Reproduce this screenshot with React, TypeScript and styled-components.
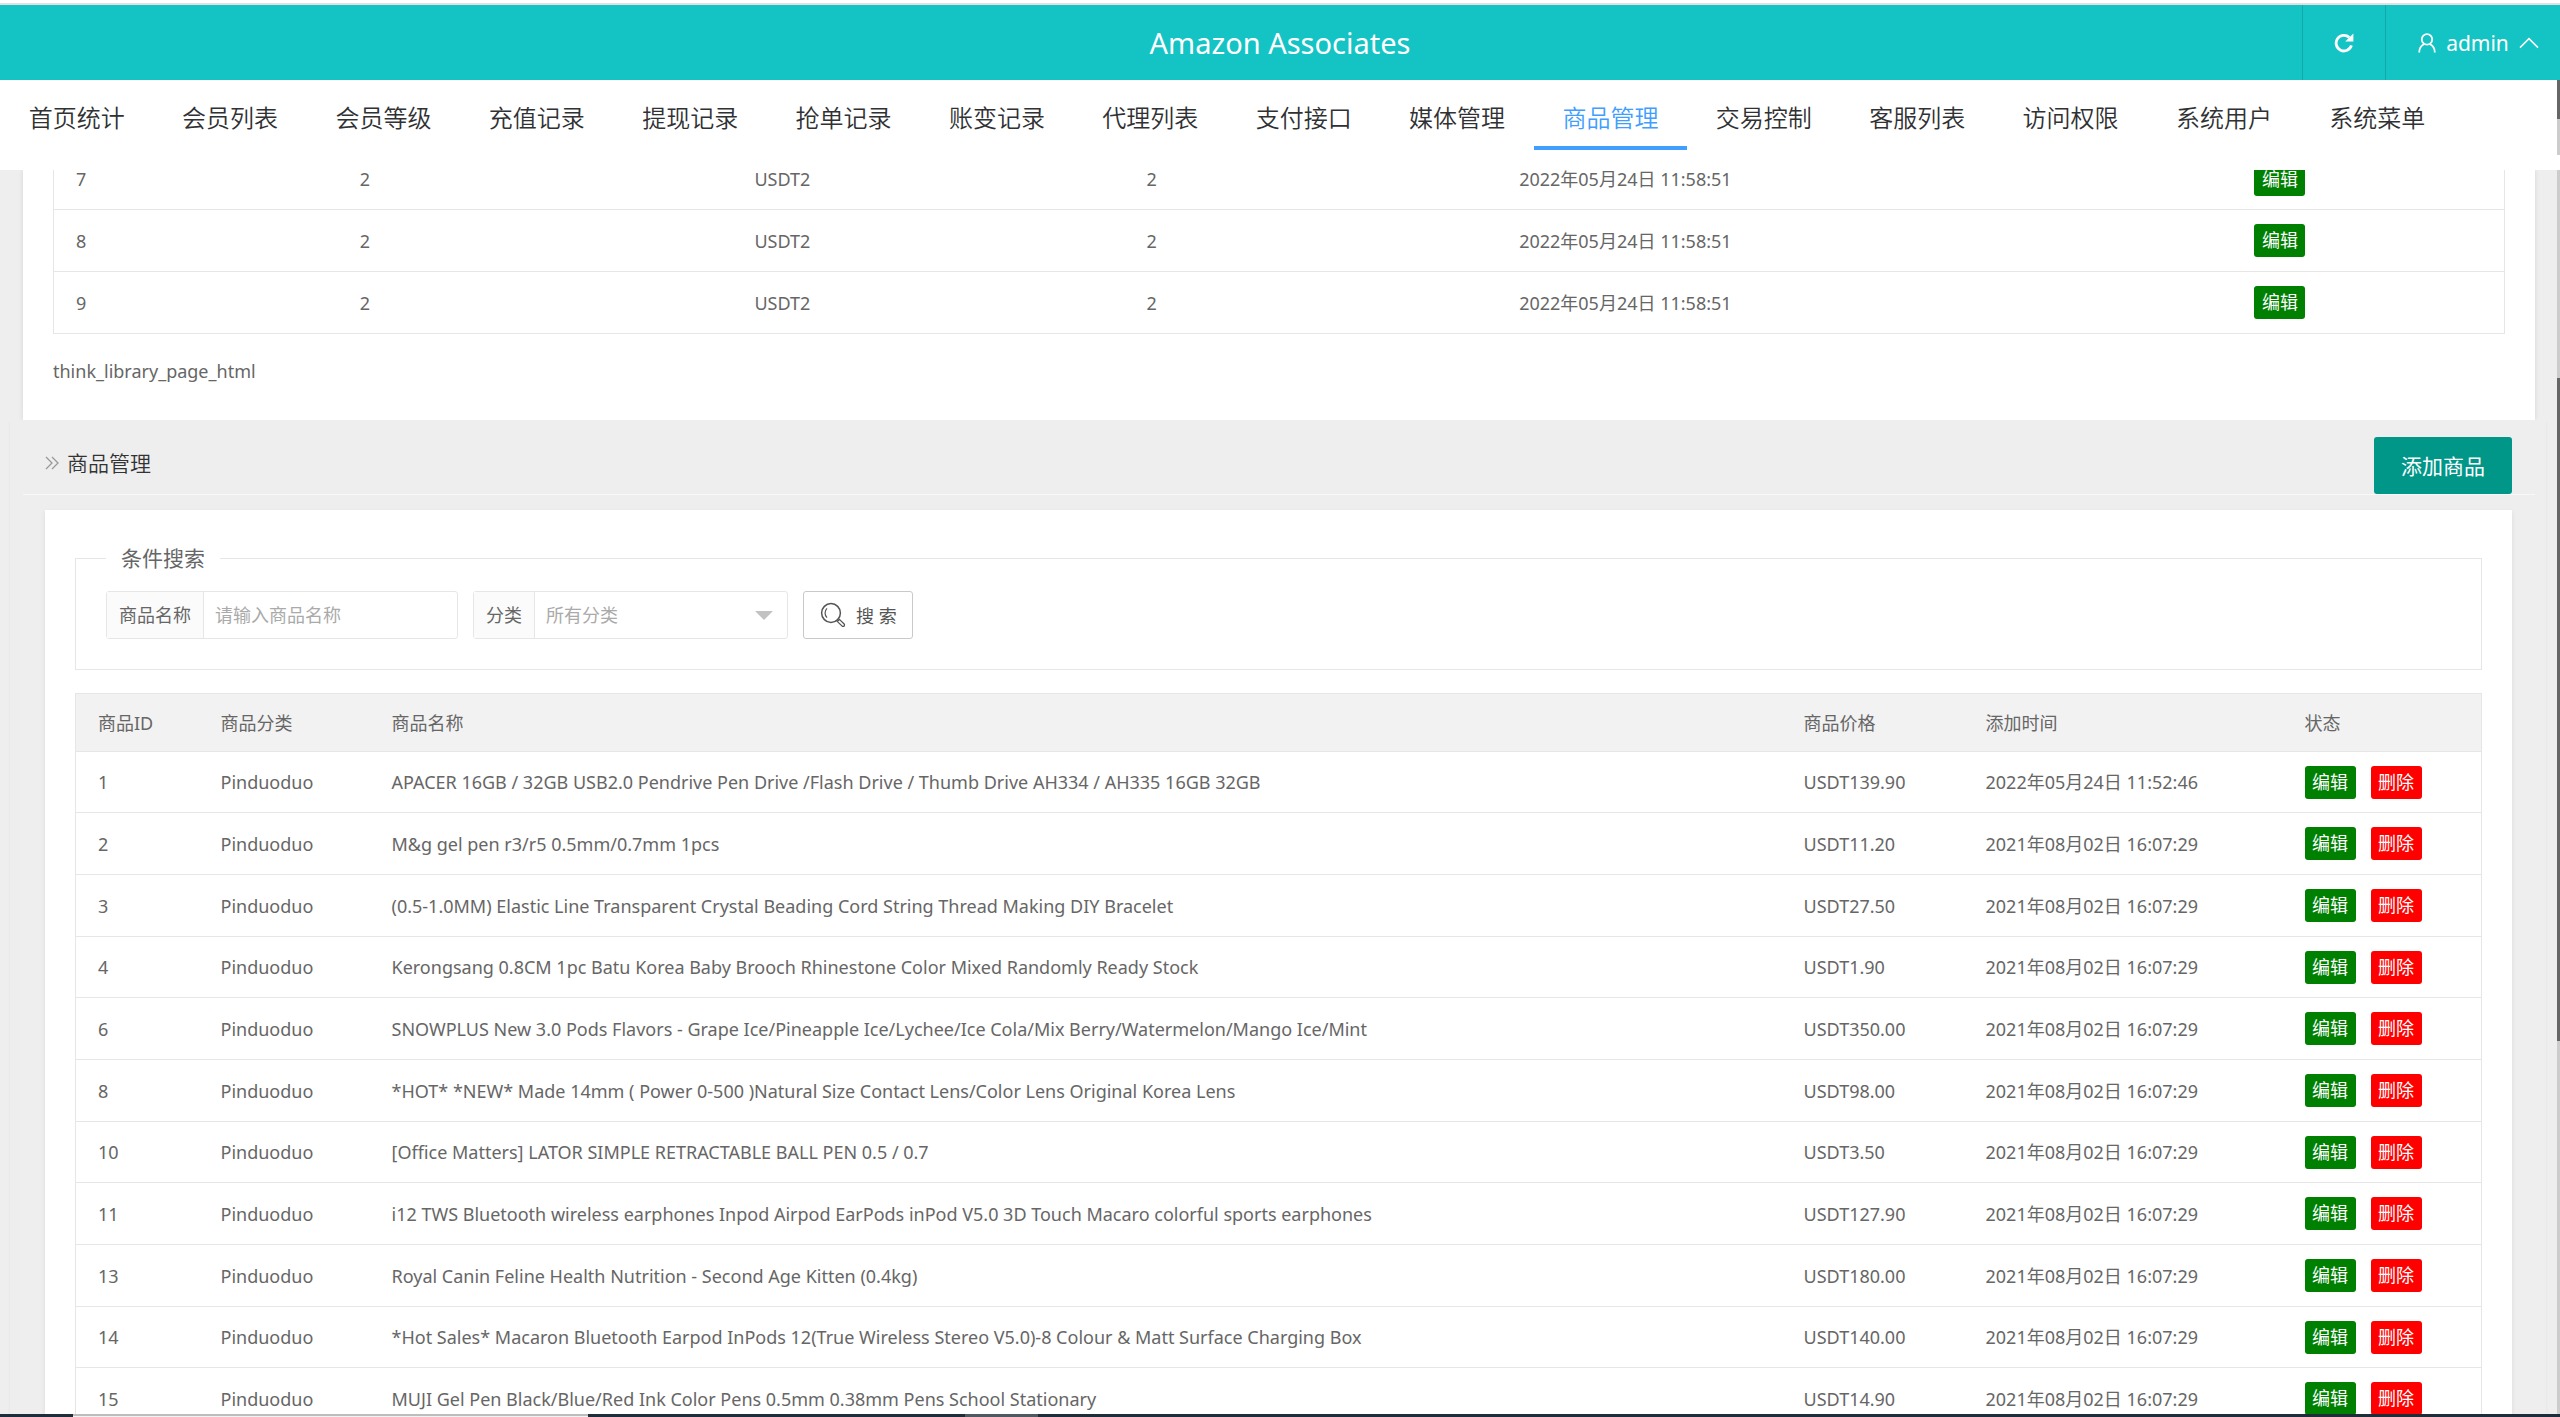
import React from 'react';
import styled, { createGlobalStyle, css } from 'styled-components';

const Global = createGlobalStyle`
  *, *::before, *::after { box-sizing: border-box; }
  html, body { margin: 0; height: 100%; overflow: hidden; }
  #root { height: 100%; }
  body, button, input, select {
    font-family: "Noto Sans", "Noto Sans CJK SC", sans-serif;
    font-size: 18px;
    color: #666;
  }
  body { background: #eee; line-height: 24px; }
`;

const Page = styled.div`
  display: flex;
  flex-direction: column;
  height: 100vh;
  overflow: hidden;
`;

const Header = styled.header`
  flex: none;
  display: grid;
  grid-template-columns: 1fr auto 1fr;
  height: 80px;
  padding-top: 5px;
  background: linear-gradient(#fff 3px, #e0e0e0 3px, #e0e0e0 5px, #14c4c5 5px);
`;

const Brand = styled.h1`
  grid-column: 2;
  margin: 0;
  align-self: center;
  font-size: 29px;
  line-height: 40px;
  font-weight: 400;
  color: #fff;
`;

const Tools = styled.div`
  display: flex;
  justify-content: flex-end;
`;

const ToolButton = styled.button<{ $wide?: boolean }>`
  display: flex;
  align-items: center;
  justify-content: center;
  gap: 10px;
  width: ${(p) => (p.$wide ? 175 : 83)}px;
  padding: ${(p) => (p.$wide ? '0 21px 0 32px' : '0')};
  border: 0;
  border-left: 1px solid #12a9ab;
  background: none;
  color: #fff;
  font-size: 21px;
`;

const Nav = styled.nav`
  flex: none;
  display: grid;
  grid-template-columns: repeat(16, 1fr);
  height: 90px;
  padding: 0 106px 20px 0;
  background: #fff;
`;

const NavLink = styled.a<{ $active: boolean }>`
  display: flex;
  align-items: center;
  justify-content: center;
  padding-top: 10px;
  border-bottom: 4px solid ${(p) => (p.$active ? '#409eff' : 'transparent')};
  color: ${(p) => (p.$active ? '#409eff' : '#303133')};
  font-size: 24px;
  font-weight: 350;
  line-height: 32px;
  text-decoration: none;
`;

const Main = styled.main`
  flex: 1;
  min-height: 0;
  overflow: hidden;
  display: flex;
  flex-direction: column;
`;

const Categories = styled.section`
  flex: none;
  height: 250px;
  margin: 0 25px 0 23px;
  padding: 0 30px;
  background: #fff;
  box-shadow: 0 0 5px rgba(0, 0, 0, 0.1);
  display: flex;
  flex-direction: column;
  overflow: hidden;
`;

const ScrolledRows = styled.div`
  flex: none;
  height: 164px;
  display: flex;
  flex-direction: column;
  justify-content: flex-end;
  overflow: hidden;
`;

const PageNote = styled.p`
  margin: 0;
  padding-top: 25px;
`;

const Table = styled.table`
  flex: none;
  width: 100%;
  table-layout: fixed;
  border-collapse: collapse;
  border: 1px solid #e6e6e6;
  background: #fff;
`;

const rule = css`
  border-bottom: 1px solid #e6e6e6;
`;

const HeadRow = styled.tr`
  height: 58px;
  background: #f2f2f2;
  ${rule}
`;

const Row = styled.tr`
  height: 62px;
  ${rule}
  &:nth-child(3n + 1) { height: 61px; }
`;

const Th = styled.th`
  padding: 0 22px;
  text-align: left;
  font-weight: 400;
`;

const Td = styled.td`
  padding: 0 22px;
  white-space: nowrap;
`;

const Actions = styled.div`
  display: flex;
  gap: 15px;
`;

const Tag = styled.button<{ $danger?: boolean }>`
  flex: none;
  width: 51px;
  height: 33px;
  padding: 0;
  border: 0;
  border-radius: 3px;
  background: ${(p) => (p.$danger ? '#f00' : '#008000')};
  color: #fff;
  line-height: 33px;
`;

const Products = styled.section`
  flex: none;
  margin: 0 14px 0 10px;
  background: #eee;
  box-shadow: 0 2px 3px rgba(0, 0, 0, 0.05);
`;

const SectionHead = styled.div`
  display: flex;
  align-items: center;
  justify-content: space-between;
  height: 75px;
  margin: 0 11px 0 13px;
  padding: 17px 23px 0 22px;
  border-bottom: 1px solid #f8f8f8;
`;

const SectionTitle = styled.h2`
  display: flex;
  align-items: center;
  gap: 8px;
  margin: 0;
  padding-bottom: 6px;
  font-size: 21px;
  font-weight: 350;
  color: #333;
`;

const AddButton = styled.button`
  height: 57px;
  padding: 0 27px 2px;
  border: 0;
  border-radius: 3px;
  background: #009688;
  color: #fff;
  font-size: 21px;
`;

const Card = styled.div`
  margin: 15px 34px 0 35px;
  padding: 33px 30px;
  background: #fff;
  box-shadow: 0 2px 5px rgba(0, 0, 0, 0.08);
`;

const SearchBox = styled.fieldset`
  margin: 0 0 23px;
  padding: 18px 30px 30px;
  border: 1px solid #e6e6e6;
`;

const Legend = styled.legend`
  padding: 0 15px;
  font-size: 21px;
  line-height: 30px;
`;

const SearchForm = styled.form`
  display: flex;
  gap: 15px;
`;

const Field = styled.div<{ $width: number }>`
  display: flex;
  width: ${(p) => p.$width}px;
  height: 48px;
  border: 1px solid #e6e6e6;
  border-radius: 3px;
  background: #fff;
`;

const FieldLabel = styled.label`
  flex: none;
  padding: 0 12px;
  border-right: 1px solid #e6e6e6;
  background: #fbfbfb;
  line-height: 46px;
`;

const TextInput = styled.input`
  flex: 1;
  min-width: 0;
  padding: 0 11px;
  border: 0;
  outline: 0;
  background: none;
  &::placeholder { color: #aaa; }
`;

const SelectWrap = styled.div`
  flex: 1;
  display: flex;
  align-items: center;
  padding-right: 14px;
`;

const Select = styled.select`
  flex: 1;
  align-self: stretch;
  padding: 0 11px;
  border: 0;
  appearance: none;
  background: none;
  color: #aaa;
`;

const SearchButton = styled.button`
  display: flex;
  align-items: center;
  gap: 10px;
  height: 48px;
  padding: 0 15px 0 16px;
  border: 1px solid #c9c9c9;
  border-radius: 3px;
  background: #fff;
  color: #555;
`;

const TopScroll = styled.div`
  position: absolute;
  top: 80px;
  right: 0;
  width: 3px;
  height: 75px;
  background: linear-gradient(#666 39px, #ccc 39px);
`;

const PageScroll = styled.div`
  position: absolute;
  top: 170px;
  right: 0;
  bottom: 3px;
  width: 3px;
  background: linear-gradient(#ccc 208px, #666 208px, #666 871px, #ccc 871px);
`;

const Taskbar = styled.footer`
  flex: none;
  display: flex;
  height: 3px;
  background: #1f2d38;
`;

const TaskGap = styled.div<{ $width: number }>`
  width: ${(p) => p.$width}px;
`;

const TaskWindow = styled.div`
  width: 515px;
  background: linear-gradient(#bdbdbd 2px, #f2f2f2 2px);
`;

const TaskItem = styled.div`
  width: 73px;
  background: #4d5a62;
`;

const menu = [
  '首页统计', '会员列表', '会员等级', '充值记录', '提现记录', '抢单记录', '账变记录', '代理列表',
  '支付接口', '媒体管理', '商品管理', '交易控制', '客服列表', '访问权限', '系统用户', '系统菜单',
];

const categories = [7, 8, 9].map((id) => ({
  id, level: '2', price: 'USDT2', sort: '2', time: '2022年05月24日 11:58:51',
}));

const stamp = '2021年08月02日 16:07:29';

const products = [
  { id: 1, name: 'APACER 16GB / 32GB USB2.0 Pendrive Pen Drive /Flash Drive / Thumb Drive AH334 / AH335 16GB 32GB', price: '139.90', time: '2022年05月24日 11:52:46' },
  { id: 2, name: 'M&g gel pen r3/r5 0.5mm/0.7mm 1pcs', price: '11.20', time: stamp },
  { id: 3, name: '(0.5-1.0MM) Elastic Line Transparent Crystal Beading Cord String Thread Making DIY Bracelet', price: '27.50', time: stamp },
  { id: 4, name: 'Kerongsang 0.8CM 1pc Batu Korea Baby Brooch Rhinestone Color Mixed Randomly Ready Stock', price: '1.90', time: stamp },
  { id: 6, name: 'SNOWPLUS New 3.0 Pods Flavors - Grape Ice/Pineapple Ice/Lychee/Ice Cola/Mix Berry/Watermelon/Mango Ice/Mint', price: '350.00', time: stamp },
  { id: 8, name: '*HOT* *NEW* Made 14mm ( Power 0-500 )Natural Size Contact Lens/Color Lens Original Korea Lens', price: '98.00', time: stamp },
  { id: 10, name: '[Office Matters] LATOR SIMPLE RETRACTABLE BALL PEN 0.5 / 0.7', price: '3.50', time: stamp },
  { id: 11, name: 'i12 TWS Bluetooth wireless earphones Inpod Airpod EarPods inPod V5.0 3D Touch Macaro colorful sports earphones', price: '127.90', time: stamp },
  { id: 13, name: 'Royal Canin Feline Health Nutrition - Second Age Kitten (0.4kg)', price: '180.00', time: stamp },
  { id: 14, name: '*Hot Sales* Macaron Bluetooth Earpod InPods 12(True Wireless Stereo V5.0)-8 Colour & Matt Surface Charging Box', price: '140.00', time: stamp },
  { id: 15, name: 'MUJI Gel Pen Black/Blue/Red Ink Color Pens 0.5mm 0.38mm Pens School Stationary', price: '14.90', time: stamp },
];

const Columns = ({ widths }: { widths: string[] }) => (
  <colgroup>{widths.map((width, i) => <col key={i} style={{ width }} />)}</colgroup>
);

const RefreshIcon = () => (
  <svg width="20" height="20" viewBox="0 0 20 20" fill="none" aria-hidden="true">
    <path d="M17.4 12.4A7.8 7.8 0 1 1 15.2 4.4" stroke="#fff" strokeWidth="2.8" />
    <path d="M19.4 0.6V8.4H11.2Z" fill="#fff" />
  </svg>
);

const UserIcon = () => (
  <svg width="18" height="20" viewBox="0 0 18 20" fill="none" stroke="#fff" strokeWidth="1.8" aria-hidden="true">
    <circle cx="9" cy="6.4" r="5.2" />
    <path d="M1.2 19.4C1.2 15.4 3 12.6 6.4 11M16.8 19.4C16.8 15.4 15 12.6 11.6 11" />
  </svg>
);

const ChevronUp = () => (
  <svg width="20" height="12" viewBox="0 0 20 12" fill="none" stroke="#fff" strokeWidth="1.5" aria-hidden="true">
    <path d="M1 10.6L10 1.6L19 10.6" />
  </svg>
);

const DoubleArrow = () => (
  <svg width="14" height="14" viewBox="0 0 14 14" fill="none" stroke="#999" strokeWidth="1.3" aria-hidden="true">
    <path d="M1 1L7 7L1 13M7 1L13 7L7 13" />
  </svg>
);

const SearchIcon = () => (
  <svg width="26" height="26" viewBox="0 0 26 26" fill="none" stroke="#555" aria-hidden="true">
    <circle cx="11" cy="11" r="9.4" strokeWidth="1.5" />
    <path d="M7 15.6A6.4 6.4 0 0 1 7 6.4" strokeWidth="1.2" />
    <path d="M17.2 19.4L19.4 17.4L24.4 22.2Q25 24.6 22.4 24.4Z" strokeWidth="1.3" strokeLinejoin="round" />
  </svg>
);

const Caret = () => (
  <svg width="18" height="9" viewBox="0 0 18 9" aria-hidden="true">
    <path d="M0 0H18L9 9Z" fill="#c2c2c2" />
  </svg>
);

export default function App() {
  return (
    <Page>
      <Global />
      <Header>
        <Brand>Amazon Associates</Brand>
        <Tools>
          <ToolButton type="button" aria-label="刷新"><RefreshIcon /></ToolButton>
          <ToolButton type="button" $wide><UserIcon />admin<ChevronUp /></ToolButton>
        </Tools>
      </Header>
      <Nav>
        {menu.map((item) => (
          <NavLink key={item} href="#" $active={item === '商品管理'}>{item}</NavLink>
        ))}
      </Nav>
      <Main>
        <Categories>
          <ScrolledRows>
            <Table>
              <Columns widths={['11.6%', '16.1%', '16%', '15.2%', '30%', '11.1%']} />
              <tbody>
                {categories.map((c) => (
                  <Row key={c.id}>
                    <Td>{c.id}</Td>
                    <Td>{c.level}</Td>
                    <Td>{c.price}</Td>
                    <Td>{c.sort}</Td>
                    <Td>{c.time}</Td>
                    <Td><Actions><Tag type="button">编辑</Tag></Actions></Td>
                  </Row>
                ))}
              </tbody>
            </Table>
          </ScrolledRows>
          <PageNote>think_library_page_html</PageNote>
        </Categories>
        <Products>
          <SectionHead>
            <SectionTitle><DoubleArrow />商品管理</SectionTitle>
            <AddButton type="button">添加商品</AddButton>
          </SectionHead>
          <Card>
            <SearchBox>
              <Legend>条件搜索</Legend>
              <SearchForm>
                <Field $width={352}>
                  <FieldLabel htmlFor="title">商品名称</FieldLabel>
                  <TextInput id="title" placeholder="请输入商品名称" />
                </Field>
                <Field $width={315}>
                  <FieldLabel htmlFor="cate">分类</FieldLabel>
                  <SelectWrap>
                    <Select id="cate"><option>所有分类</option></Select>
                    <Caret />
                  </SelectWrap>
                </Field>
                <SearchButton type="button"><SearchIcon />搜 索</SearchButton>
              </SearchForm>
            </SearchBox>
            <Table>
              <Columns widths={['123px', '171px', 'auto', '182px', '319px', '199px']} />
              <thead>
                <HeadRow>
                  {['商品ID', '商品分类', '商品名称', '商品价格', '添加时间', '状态'].map((h) => <Th key={h}>{h}</Th>)}
                </HeadRow>
              </thead>
              <tbody>
                {products.map((p) => (
                  <Row key={p.id}>
                    <Td>{p.id}</Td>
                    <Td>Pinduoduo</Td>
                    <Td>{p.name}</Td>
                    <Td>USDT{p.price}</Td>
                    <Td>{p.time}</Td>
                    <Td>
                      <Actions>
                        <Tag type="button">编辑</Tag>
                        <Tag type="button" $danger>删除</Tag>
                      </Actions>
                    </Td>
                  </Row>
                ))}
              </tbody>
            </Table>
          </Card>
        </Products>
      </Main>
      <Taskbar>
        <TaskGap $width={73} />
        <TaskWindow />
        <TaskGap $width={377} />
        <TaskItem />
      </Taskbar>
      <TopScroll />
      <PageScroll />
    </Page>
  );
}
